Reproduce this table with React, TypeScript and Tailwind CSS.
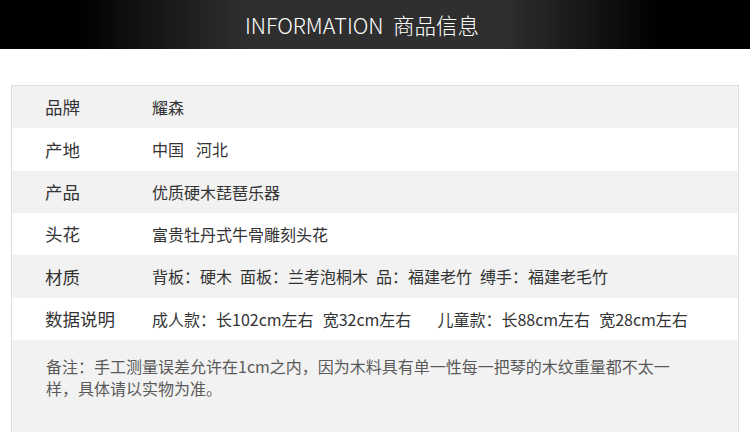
import React from "react";

const rows: { label: string; value: React.ReactNode; gray: boolean }[] = [
  { label: "品牌", value: "耀森", gray: true },
  {
    label: "产地",
    value: (
      <span className="flex">
        <span>中国</span>
        <span className="ml-[12px]">河北</span>
      </span>
    ),
    gray: false,
  },
  { label: "产品", value: "优质硬木琵琶乐器", gray: true },
  { label: "头花", value: "富贵牡丹式牛骨雕刻头花", gray: false },
  {
    label: "材质",
    value: (
      <span className="flex">
        <span>背板：硬木</span>
        <span className="ml-[8px]">面板：兰考泡桐木</span>
        <span className="ml-[8px]">品：福建老竹</span>
        <span className="ml-[8px]">缚手：福建老毛竹</span>
      </span>
    ),
    gray: true,
  },
  {
    label: "数据说明",
    value: (
      <span className="flex">
        <span>成人款：长102cm左右</span>
        <span className="ml-[9px]">宽32cm左右</span>
        <span className="ml-[26px]">儿童款：长88cm左右</span>
        <span className="ml-[9px]">宽28cm左右</span>
      </span>
    ),
    gray: false,
  },
];

export default function App() {
  return (
    <div
      className="w-[750px] h-[432px] overflow-hidden bg-white"
      style={{ fontFamily: '"Noto Sans CJK SC", "Noto Sans", sans-serif' }}
    >
      <div className="h-[49px] flex items-center justify-center bg-[linear-gradient(to_right,#000_10%,#2f2f2f_33%,#2f2f2f_67%,#000_88%)]">
        <span className="text-white text-[21.5px] font-light leading-none mr-[26px]">
          INFORMATION&nbsp;&nbsp;商品信息
        </span>
      </div>
      <div className="mt-[36px] mx-[11px] border border-[#dedede] border-b-0">
        {rows.map((r) => (
          <div
            key={r.label}
            className={`flex items-center h-[42.33px] ${r.gray ? "bg-[#f2f2f2]" : "bg-white"}`}
          >
            <div className="w-[140px] pl-[33px] text-[17.5px] text-[#333] leading-none">{r.label}</div>
            <div className="text-[16px] text-[#333] leading-none whitespace-nowrap">{r.value}</div>
          </div>
        ))}
        <div className="bg-[#f2f2f2] h-[100px] pl-[34px] pt-[15px] pr-[60px]">
          <p className="text-[16px] leading-[22px] text-[#5a5a5a] font-normal">
            备注：手工测量误差允许在1cm之内，因为木料具有单一性每一把琴的木纹重量都不太一样，具体请以实物为准。
          </p>
        </div>
      </div>
    </div>
  );
}
